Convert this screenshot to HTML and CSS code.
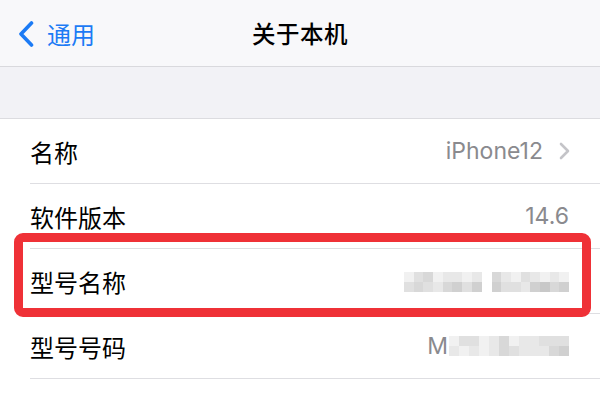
FILE: index.html
```html
<!DOCTYPE html>
<html lang="zh-CN">
<head>
<meta charset="utf-8">
<title>关于本机</title>
<link rel="stylesheet" href="styles.css">
</head>
<body>
<div class="screen">
  <header class="nav">
    <div class="back">
      <svg class="back-icon" width="18" height="26" viewBox="0 0 18 26"><path d="M14.5 2 L4 13 L14.5 24" fill="none" stroke="#1c7bf5" stroke-width="3.6" stroke-linecap="round" stroke-linejoin="round"/></svg>
      <span class="back-text">通用</span>
    </div>
    <div class="title">关于本机</div>
    <div class="spacer"></div>
  </header>
  <div class="gap"></div>
  <ul class="list">
    <li class="row">
      <div class="row-inner">
        <span class="label">名称</span>
        <span class="value">iPhone12</span>
        <svg class="chev" width="11" height="18" viewBox="0 0 11 18"><path d="M2 2 L9 9 L2 16" fill="none" stroke="#c4c4c8" stroke-width="2.6" stroke-linecap="round" stroke-linejoin="round"/></svg>
      </div>
    </li>
    <li class="row">
      <div class="row-inner">
        <span class="label">软件版本</span>
        <span class="value">14.6</span>
      </div>
    </li>
    <li class="row">
      <div class="row-inner">
        <span class="label">型号名称</span>
        <div class="blur-wrap">
          <div class="blur cols8">
            <i class="s1"></i><i class="s3"></i><i class="s4"></i><i class="s1"></i><i class="s2"></i><i class="s2"></i><i class="s1"></i><i class="s2"></i>
            <i class="s3"></i><i class="s4"></i><i class="s3"></i><i class="s2"></i><i class="s4"></i><i class="s5"></i><i class="s3"></i><i class="s5"></i>
          </div>
          <div class="blur cols8">
            <i class="s4"></i><i class="s2"></i><i class="s1"></i><i class="s3"></i><i class="s2"></i><i class="s1"></i><i class="s2"></i><i class="s1"></i>
            <i class="s5"></i><i class="s3"></i><i class="s3"></i><i class="s2"></i><i class="s5"></i><i class="s6"></i><i class="s4"></i><i class="s5"></i>
          </div>
        </div>
      </div>
    </li>
    <li class="row">
      <div class="row-inner">
        <span class="label">型号号码</span>
        <div class="blur-wrap tight">
          <span class="m">M</span>
          <div class="blur cols12">
            <i class="s1"></i><i class="s3"></i><i class="s3"></i><i class="s1"></i><i class="s2"></i><i class="s4"></i><i class="s1"></i><i class="s2"></i><i class="s2"></i><i class="s3"></i><i class="s3"></i><i class="s3"></i>
            <i class="s2"></i><i class="s1"></i><i class="s2"></i><i class="s1"></i><i class="s2"></i><i class="s4"></i><i class="s3"></i><i class="s2"></i><i class="s2"></i><i class="s2"></i><i class="s4"></i><i class="s5"></i>
          </div>
        </div>
      </div>
    </li>
  </ul>
  <div class="highlight"></div>
</div>
</body>
</html>
```

FILE: styles.css
```css
* { box-sizing: border-box; }
html, body { margin: 0; padding: 0; background: #ffffff; }
body {
  font-family: "Noto Sans CJK SC", "Noto Sans", sans-serif;
  color: #000;
}
.screen {
  position: relative;
  width: 600px;
  height: 400px;
  overflow: hidden;
  background: #fff;
}
.nav {
  height: 67px;
  background: #f8f8fa;
  border-bottom: 1px solid #d9d9dd;
  display: grid;
  grid-template-columns: 1fr auto 1fr;
  align-items: center;
}
.back {
  display: flex;
  align-items: center;
  padding-left: 17px;
  padding-top: 2px;
}
.back-icon { display: block; }
.back-text {
  margin-left: 12px;
  font-size: 24px;
  color: #1c7bf5;
  line-height: 1;
}
.title {
  font-size: 23.5px;
  font-weight: 500;
  letter-spacing: 0.5px;
  line-height: 1;
  padding-top: 2px;
}
.gap {
  height: 52px;
  background: #f2f2f6;
  border-bottom: 1px solid #dcdce0;
}
.list {
  list-style: none;
  margin: 0;
  padding: 0;
}
.row {
  padding-left: 30px;
  background: #fff;
}
.row-inner {
  height: 65px;
  display: flex;
  align-items: center;
  padding-right: 31px;
  border-bottom: 1px solid #dedee2;
}
.label {
  flex: 1;
  font-size: 24px;
  line-height: 1;
  padding-top: 2px;
}
.value {
  font-family: "Inter", "Noto Sans", sans-serif;
  font-size: 23px;
  color: #8a8a8e;
  line-height: 1;
}
.chev {
  display: block;
  margin-left: 16px;
  margin-right: -1px;
}
.blur-wrap {
  display: flex;
  align-items: center;
  gap: 10px;
  padding-top: 2px;
}
.blur-wrap.tight { gap: 1px; padding-top: 0; }
.m {
  font-family: "Inter", "Noto Sans", sans-serif;
  font-size: 23px;
  color: #8a8a8e;
  line-height: 1;
}
.blur {
  display: grid;
  grid-auto-rows: 10px;
}
.cols8 { grid-template-columns: repeat(8, 9.7px); }
.cols12 { grid-template-columns: repeat(12, 10px); }
.blur i { display: block; }
.s1 { background: #f1f1f1; }
.s2 { background: #e8e8e8; }
.s3 { background: #e0e0e0; }
.s4 { background: #d8d8d8; }
.s5 { background: #d0d0d0; }
.s6 { background: #c8c8c8; }
.highlight {
  position: absolute;
  left: 14px;
  top: 233px;
  width: 577px;
  height: 84px;
  border: 9px solid #ef3137;
  border-radius: 9px;
  pointer-events: none;
}
```
